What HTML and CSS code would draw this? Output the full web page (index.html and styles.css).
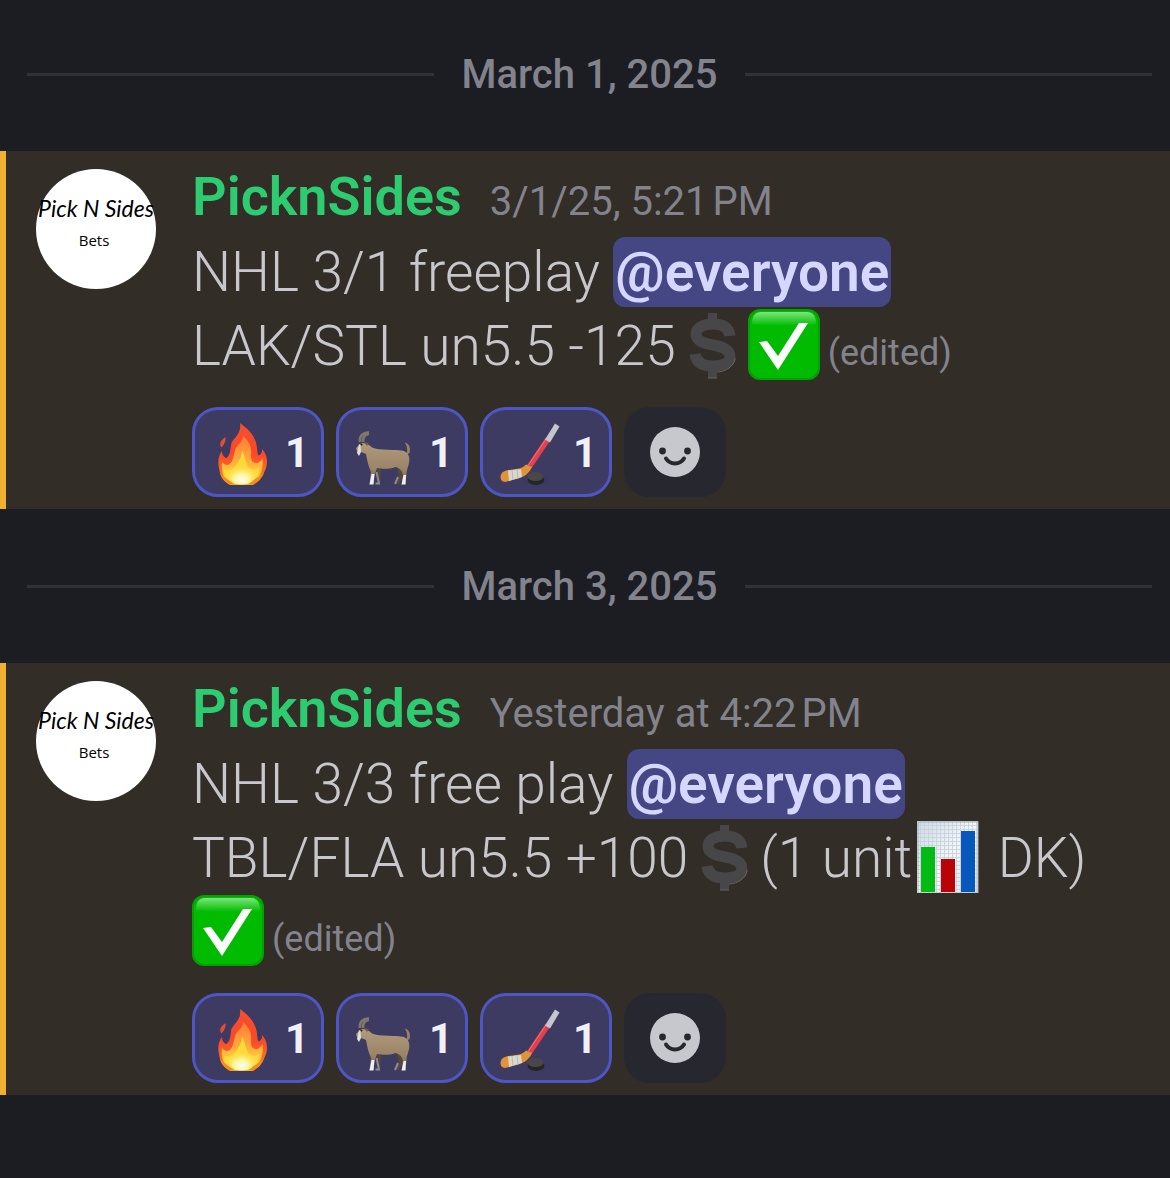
FILE: index.html
```html
<!DOCTYPE html>
<html lang="en">
<head>
<meta charset="utf-8">
<meta name="viewport" content="width=device-width, initial-scale=1">
<title>PicknSides</title>
<link rel="stylesheet" href="styles.css">
</head>
<body>
<svg class="sprite" aria-hidden="true">
  <defs>
    <linearGradient id="check-gloss" x1="0" y1="0" x2="0" y2="1">
      <stop offset="0" stop-color="#7be67b"/><stop offset="1" stop-color="#00bb00"/>
    </linearGradient>
    <linearGradient id="flame-outer" x1="0" y1="0" x2="0" y2="1">
      <stop offset="0" stop-color="#f4502e"/><stop offset=".5" stop-color="#f9482a"/><stop offset="1" stop-color="#f98a20"/>
    </linearGradient>
    <linearGradient id="flame-inner" x1="0" y1="0" x2="0" y2="1">
      <stop offset="0" stop-color="#ff7a35"/><stop offset=".45" stop-color="#ffa63a"/><stop offset="1" stop-color="#ffe23c"/>
    </linearGradient>
    <radialGradient id="flame-core" cx=".5" cy=".8" r=".6">
      <stop offset="0" stop-color="#fffff0"/><stop offset=".4" stop-color="#fff59a"/><stop offset="1" stop-color="#ffd836" stop-opacity="0"/>
    </radialGradient>
    <linearGradient id="goat-coat" x1="0" y1="0" x2="0" y2="1">
      <stop offset="0" stop-color="#b09a7c"/><stop offset=".6" stop-color="#9c8568"/><stop offset="1" stop-color="#7d684f"/>
    </linearGradient>
    <linearGradient id="chart-paper" x1="0" y1="0" x2="1" y2="1">
      <stop offset="0" stop-color="#cbd9e6"/><stop offset=".5" stop-color="#f4f6f8"/><stop offset="1" stop-color="#dfe3e6"/>
    </linearGradient>
    <pattern id="chart-grid" width="4" height="4" patternUnits="userSpaceOnUse">
      <path d="M0 .5H4M.5 0V4" stroke="#c3cfdb" stroke-width=".8"/>
    </pattern>
  </defs>

  <symbol id="check" viewBox="0 0 72 72">
    <rect width="72" height="71" rx="12" fill="#04a004"/>
    <rect x="2" y="2" width="68" height="67" rx="11" fill="#00bb00"/>
    <path d="M13 3H59Q68 3 68 15Q36 19 4 15Q4 3 13 3Z" fill="url(#check-gloss)"/>
    <path d="M11 33L19 32L30 47L51 14H60L30 61Z" fill="#fff"/>
  </symbol>

  <symbol id="dollar" viewBox="0 0 72 72">
    <path d="M54 27C53 18 46 15 37 15C27 15 20 19 20 25C20 32 27 34 37 36C48 38 54 41 54 48C54 54 47 57 37 57C26 57 20 53 19 45" fill="none" stroke="#47474a" stroke-width="11"/>
    <path d="M32 4h9v8h-9zM32 60h9v9h-9z" fill="#47474a"/>
    <path d="M32 69h9M59 49C59 57 49 63 41 63" fill="none" stroke="#66645f"/>
  </symbol>

  <symbol id="chart" viewBox="0 0 72 72">
    <rect x="5" width="61" height="72" fill="url(#chart-paper)"/>
    <rect x="5" width="61" height="72" fill="url(#chart-grid)"/>
    <rect x="6" y="1" width="60" height="71" fill="none" stroke="#a9b0b5"/>
    <rect x="9" y="26" width="14" height="45" fill="#04bb14"/>
    <rect x="29" y="38" width="14" height="33" fill="#b80408"/>
    <rect x="49" y="10" width="14" height="61" fill="#0757bd"/>
  </symbol>

  <symbol id="fire" viewBox="7 6 64 64" overflow="visible">
    <path d="M21.500 23C22 27 20.500 30 17.500 33.500C14.500 30 17 26 21.500 23Z" fill="#ee4a31"/>
    <path d="M36 9C44 15 52 22 53 34C53.500 38 53.500 40 54.500 41.500C57 40.500 58.500 38 58 35C62 39 64 45 62.500 52C61.500 57 58 64 50 70.500H25C19 67 16 62 15 54C13.500 48 14.500 41 18 37C18 41 20 43.500 22.500 44C26 41 26.500 36 27 31C28 24 38 21 36 9Z" fill="url(#flame-outer)"/>
    <path d="M39 22C46 28 48 34 47 42C47 47 49.500 49.500 53 49C55 48.500 57 47 58.500 44C60 52 57 63 49 70.500H26C20 65 17 58 18 48C21 52 25 52 27.500 48C30.500 43 29.500 36 34 31C37 28 39 26 39 22Z" fill="url(#flame-inner)"/>
    <path d="M38 36C41 42 42 50 45 54C48 57 52 56 55 53C55 60 52 67 48 70.500H27C22 66 20 61 20 55C24 58 28 56 31 52C35 47 38 43 38 36Z" fill="#ffd938"/>
    <path d="M16 59Q18 67 26 70.500H49Q57 67 60 59L51 65L44 70.500H31L23 65Z" fill="#f88a22"/>
    <ellipse cx="37.500" cy="58" rx="16" ry="12.500" fill="url(#flame-core)"/>
  </symbol>

  <symbol id="goat" viewBox="6 6 64 64" overflow="visible">
    <path d="M27 49L30 68.500L27 70.500H31L32 56ZM47 50L50 63L46 69L50 70L54 63L55 50Z" fill="#55473c"/>
    <path d="M27.500 58L30 69.500H26.500M49 63L46 70" fill="none" stroke="#8d8c91" stroke-width="2"/>
    <path d="M55.500 28.500C60 29 62 34 60.500 39L57.500 41C59 36 58 31 55.500 28.500Z" fill="#9a8266"/>
    <path d="M12 29.500C16 28 20 31 23 33.500C30 37 48 35 55 37C60 39 61 44 60 49C59 54 57.500 56 57.500 61L56.500 70H53L54 61C53 56 50 54 47 53C40 55.500 33 55 28 54L25.500 61L24.500 70H20.500L22 58C19 52 18 45 17 40C14 39 11 37 8 37L7 34Z" fill="url(#goat-coat)"/>
    <path d="M22.500 60L25.500 60L24.500 70.500H20.500ZM54.500 61L57 61L56.500 70.500H52.500Z" fill="#f0eff2"/>
    <path d="M10 30L8 39L10 42L12 38L11.500 31Z" fill="#e5dfda"/>
    <circle cx="12.500" cy="30.500" r="1" fill="#221c18"/>
    <path d="M15 28L20 29L18 32Z" fill="#725c47"/>
    <path d="M11 28C10 22 14 18 20 18.500M14 28C14 23 16 20 20 20" fill="none" stroke="#82776a" stroke-width="2.600"/>
  </symbol>

  <symbol id="hockey" viewBox="5 6 64 64" overflow="visible">
    <ellipse cx="42" cy="66" rx="8.500" ry="5" fill="#262626"/>
    <ellipse cx="41.500" cy="62.500" rx="8" ry="4.500" fill="#484849"/>
    <path d="M35.500 52.500L54 25" stroke="#e3404e" stroke-width="5.500"/>
    <path d="M34.500 51L52 25" stroke="#f4737a" stroke-width="1"/>
    <path d="M51 25.500L61 9.500L65.500 12.500L56 28.500Z" fill="#c5c6cb"/>
    <path d="M32 50.500L38 53C35 60 30 63 22 65L11 68C6 68 5 61 9 58C15 54 27 57 32 50.500Z" fill="#e09337"/>
    <path d="M14 56.500L27 55L28 63L15 67Z" fill="#d9d8cf"/>
    <path d="M18 56L19 66M23 55.500L24 65" stroke="#b9b8ae" stroke-width="1"/>
  </symbol>

  <symbol id="smiley" viewBox="0 0 50 50">
    <circle cx="25" cy="25" r="25" fill="#c7c8ce"/>
    <circle cx="12.500" cy="24" r="3.400" fill="#27272f"/>
    <circle cx="37.500" cy="24" r="3.400" fill="#27272f"/>
    <path d="M16 31.500C20 38 30 38 34 31.500" fill="none" stroke="#27272f" stroke-width="4" stroke-linecap="round"/>
  </symbol>
</svg>

<main class="chat">
  <div class="divider"><time datetime="2025-03-01">March 1, 2025</time></div>

  <article class="message">
    <svg class="avatar" viewBox="0 0 120 120" role="img" aria-label="PicknSides avatar">
      <circle cx="60" cy="60" r="60" fill="#fff"/>
      <text class="logo-script" x="60" y="48" text-anchor="middle">Pick N Sides</text>
      <text class="logo-sub" x="58" y="77" text-anchor="middle">Bets</text>
    </svg>
    <div class="body">
      <header class="meta">
        <h2 class="author">PicknSides</h2>
        <time class="stamp" datetime="2025-03-01T17:21">3/1/25, 5:21&#8239;PM</time>
      </header>
      <p class="text">NHL 3/1 freeplay <a class="mention" href="#everyone">@everyone</a><br>LAK/STL un5.5 -125<svg class="emoji" role="img" aria-label="Dollar"><use href="#dollar"/></svg><svg class="emoji" role="img" aria-label="Check mark"><use href="#check"/></svg><span class="edited">(edited)</span></p>
      <div class="reactions">
        <button class="reaction" type="button"><svg class="icon" role="img" aria-label="Fire"><use href="#fire"/></svg>1</button>
        <button class="reaction" type="button"><svg class="icon" role="img" aria-label="Goat"><use href="#goat"/></svg>1</button>
        <button class="reaction" type="button"><svg class="icon" role="img" aria-label="Ice hockey"><use href="#hockey"/></svg>1</button>
        <button class="reaction add" type="button" aria-label="Add reaction"><svg class="smiley" aria-hidden="true"><use href="#smiley"/></svg></button>
      </div>
    </div>
  </article>

  <div class="divider"><time datetime="2025-03-03">March 3, 2025</time></div>

  <article class="message">
    <svg class="avatar" viewBox="0 0 120 120" role="img" aria-label="PicknSides avatar">
      <circle cx="60" cy="60" r="60" fill="#fff"/>
      <text class="logo-script" x="60" y="48" text-anchor="middle">Pick N Sides</text>
      <text class="logo-sub" x="58" y="77" text-anchor="middle">Bets</text>
    </svg>
    <div class="body">
      <header class="meta">
        <h2 class="author">PicknSides</h2>
        <time class="stamp" datetime="2025-03-03T16:22">Yesterday at 4:22&#8239;PM</time>
      </header>
      <p class="text">NHL 3/3 free play <a class="mention" href="#everyone">@everyone</a><br>TBL/FLA un5.5 +100<svg class="emoji" role="img" aria-label="Dollar"><use href="#dollar"/></svg>(1 unit<svg class="emoji" role="img" aria-label="Bar chart"><use href="#chart"/></svg> DK) <svg class="emoji" role="img" aria-label="Check mark"><use href="#check"/></svg><span class="edited">(edited)</span></p>
      <div class="reactions">
        <button class="reaction" type="button"><svg class="icon" role="img" aria-label="Fire"><use href="#fire"/></svg>1</button>
        <button class="reaction" type="button"><svg class="icon" role="img" aria-label="Goat"><use href="#goat"/></svg>1</button>
        <button class="reaction" type="button"><svg class="icon" role="img" aria-label="Ice hockey"><use href="#hockey"/></svg>1</button>
        <button class="reaction add" type="button" aria-label="Add reaction"><svg class="smiley" aria-hidden="true"><use href="#smiley"/></svg></button>
      </div>
    </div>
  </article>
</main>
</body>
</html>
```
FILE: styles.css
```css
* {
  box-sizing: border-box;
}

body {
  margin: 0;
  background: #1c1d22;
  color: #c7c7cc;
  font-family: Roboto, "Noto Sans", sans-serif;
}

.sprite {
  position: absolute;
  width: 0;
  height: 0;
}

.chat {
  margin-top: -3px;
}

.divider {
  display: flex;
  align-items: center;
  gap: 28px;
  height: 154px;
  padding: 0 18px 0 27px;
  color: #82838d;
  font-size: 40px;
  font-weight: 500;
}

.divider::before,
.divider::after {
  content: "";
  flex: 1;
  height: 3px;
  background: #313238;
}

.message {
  display: flex;
  gap: 36px;
  padding: 18px 12px 12px 30px;
  border-left: 6px solid #f0b132;
  background: #322d26;
}

.avatar {
  flex: none;
  width: 120px;
  height: 120px;
  overflow: visible;
}

.logo-script {
  font: italic 400 23px Lato, sans-serif;
}

.logo-sub {
  font: 15px "Open Sans", sans-serif;
}

.body {
  flex: 1;
  min-width: 0;
}

.meta {
  display: flex;
  align-items: baseline;
  gap: 28px;
  margin-bottom: 5px;
  line-height: 56px;
}

.author {
  margin: 0;
  color: #2ecc71;
  font-size: 54px;
  font-weight: 600;
}

.stamp {
  color: #82838d;
  font-size: 40px;
}

.text {
  margin: 0 0 24px;
  font-size: 55px;
  font-weight: 350;
  line-height: 74px;
}

.mention {
  padding: 3px 2px;
  border-radius: 12px;
  background: #454785;
  color: #d5d7ff;
  font-weight: 600;
  text-decoration: none;
}

.emoji {
  width: 72px;
  height: 72px;
  vertical-align: -16px;
}

.edited {
  margin-left: 8px;
  color: #82838d;
  font-size: 36px;
  font-weight: 400;
  line-height: 1;
}

.reactions {
  display: flex;
  flex-wrap: wrap;
  gap: 12px;
}

.reaction {
  display: flex;
  align-items: center;
  justify-content: center;
  gap: 10px;
  width: 132px;
  height: 90px;
  padding: 0 0 0 4px;
  border: 3px solid #4e55c4;
  border-radius: 26px;
  background: #3d3b62;
  color: #f0f0fa;
  font: 700 42px Roboto, sans-serif;
}

.icon {
  width: 64px;
  height: 64px;
  overflow: visible;
}

.add {
  width: 102px;
  padding: 0;
  border-color: #27272f;
  background: #27272f;
}

.smiley {
  width: 50px;
  height: 50px;
}
```
